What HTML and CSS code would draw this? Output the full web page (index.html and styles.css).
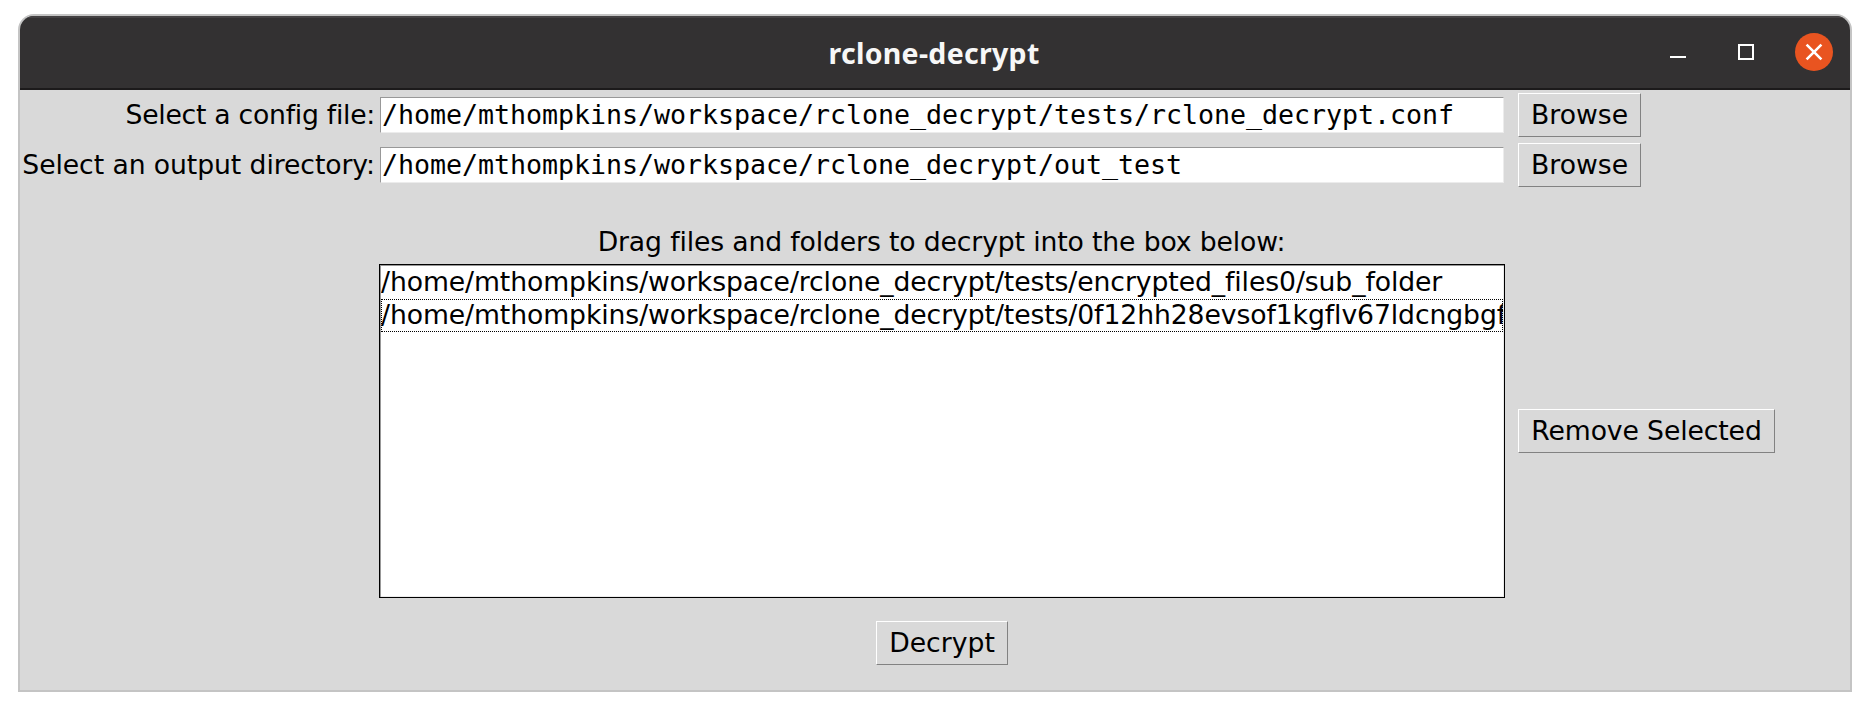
FILE: index.html
```
<!DOCTYPE html>
<html lang="en">
<head>
<meta charset="utf-8">
<title>rclone-decrypt</title>
<link rel="stylesheet" href="styles.css">
</head>
<body>
<div class="window">
  <header class="titlebar">
    <h1 class="title">rclone-decrypt</h1>
    <div class="controls">
      <svg width="16" height="16" viewBox="0 0 16 16"><path d="M0 13h16" stroke="#fff" stroke-width="2"/></svg>
      <svg width="16" height="16" viewBox="0 0 16 16"><path d="M1 1h14v14H1z" fill="none" stroke="#fff" stroke-width="2"/></svg>
      <svg class="close" width="38" height="38" viewBox="0 0 38 38"><circle cx="19" cy="19" r="19" fill="#e95420"/><path d="M11.6 11.6l14.8 14.8M26.4 11.6L11.6 26.4" stroke="#fff" stroke-width="2.6"/></svg>
    </div>
  </header>
  <main class="form">
    <div class="label label-config">Select a config file:</div>
    <div class="entry"><span>/home/mthompkins/workspace/rclone_decrypt/tests/rclone_decrypt.conf</span></div>
    <button class="btn browse">Browse</button>
    <div class="label">Select an output directory:</div>
    <div class="entry"><span>/home/mthompkins/workspace/rclone_decrypt/out_test</span></div>
    <button class="btn browse">Browse</button>
    <div class="hint"><span>Drag files and folders to decrypt into the box below:</span></div>
    <div class="list">
      <div class="item"><span>/home/mthompkins/workspace/rclone_decrypt/tests/encrypted_files0/sub_folder</span></div>
      <div class="item active"><span>/home/mthompkins/workspace/rclone_decrypt/tests/0f12hh28evsof1kgflv67ldcngbgf</span></div>
    </div>
    <button class="btn remove">Remove Selected</button>
    <button class="btn decrypt">Decrypt</button>
  </main>
</div>
</body>
</html>
```
FILE: styles.css
```
* { box-sizing: border-box; }
body {
  margin: 0;
  padding: 14px 18px 18px;
  height: 710px;
  background: #fff;
  color: #000;
  font: 26.67px/33px "DejaVu Sans", sans-serif;
  overflow: hidden;
}
.window {
  height: 678px;
  border: 2px solid #c4c4c4;
  border-radius: 16px 16px 0 0;
  background: #d9d9d9;
  overflow: hidden;
}
.titlebar {
  display: grid;
  grid-template-columns: 1fr auto 1fr;
  align-items: center;
  height: 74px;
  border-top: 2px solid #434142;
  border-bottom: 2px solid #1c1a1b;
  background: #333132;
}
.title {
  grid-column: 2;
  margin: 0 2px 0 0;
  color: #f7f7f7;
  font: bold 28.5px/36px "Noto Sans", sans-serif;
  letter-spacing: 0.3px;
}
.controls {
  display: flex;
  justify-content: flex-end;
  align-items: center;
  gap: 52px;
  padding-right: 17px;
  height: 38px;
  margin-top: -2px;
}
.close { margin-left: -11px; }
.form {
  display: grid;
  grid-template-columns: 359px 1126px auto;
  grid-template-rows: 50px 50px 74px 334px 90px;
  justify-content: start;
  align-items: center;
}
.label {
  padding: 0 4px 2px 0;
  text-align: right;
  white-space: nowrap;
  letter-spacing: -0.09px;
}
.label-config { letter-spacing: -0.27px; }
.entry {
  height: 36px;
  margin: 0 1px;
  padding: 0 1px;
  border: 1px solid;
  border-color: #989898 #ececec #ececec #989898;
  background: #fff;
  font-family: "DejaVu Sans Mono", monospace;
  letter-spacing: -0.05px;
  white-space: nowrap;
}
.btn {
  height: 44px;
  margin: 0;
  padding: 0 0 2px;
  border: 1px solid;
  border-color: #fff #828282 #828282 #fff;
  background: #d9d9d9;
  color: #000;
  font: inherit;
}
.browse { width: 123px; margin-left: 13px; }
.hint {
  grid-column: 2;
  align-self: end;
  padding: 0 1px 6px 0;
  text-align: center;
  letter-spacing: -0.14px;
}
.list {
  grid-column: 2;
  height: 334px;
  border: 1px solid #000;
  box-shadow: inset 1px 1px #989898, inset -1px -1px #ececec;
  background: #fff;
  padding: 1px;
}
.item {
  height: 33px;
  line-height: 31px;
  overflow: hidden;
  white-space: nowrap;
  letter-spacing: -0.095px;
}
.active {
  outline: 1px dotted #000;
  outline-offset: -1px;
}
.remove { width: 257px; margin-left: 13px; letter-spacing: -0.12px; }
.decrypt { grid-column: 2; justify-self: center; width: 132px; }
```
